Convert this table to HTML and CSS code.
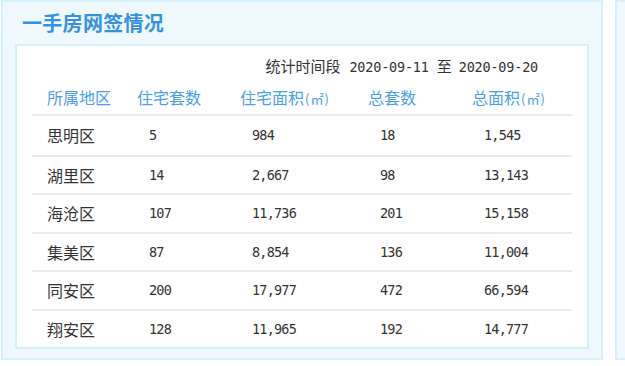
FILE: index.html
```html
<!DOCTYPE html>
<html lang="zh">
<head>
<meta charset="utf-8">
<link rel="stylesheet" href="styles.css">
</head>
<body>
<div class="page">
  <section class="panel">
    <h2 class="title">一手房网签情况</h2>
    <div class="box">
      <div class="period">统计时间段<span class="num">2020-09-11</span>至<span class="num">2020-09-20</span></div>
      <div class="table">
        <div class="row head">
          <div class="cell">所属地区</div>
          <div class="cell">住宅套数</div>
          <div class="cell">住宅面积<span class="unit">(㎡)</span></div>
          <div class="cell">总套数</div>
          <div class="cell">总面积<span class="unit">(㎡)</span></div>
        </div>
        <div class="row">
          <div class="cell name">思明区</div>
          <div class="cell num">5</div>
          <div class="cell num">984</div>
          <div class="cell num">18</div>
          <div class="cell num">1,545</div>
        </div>
        <div class="row">
          <div class="cell name">湖里区</div>
          <div class="cell num">14</div>
          <div class="cell num">2,667</div>
          <div class="cell num">98</div>
          <div class="cell num">13,143</div>
        </div>
        <div class="row">
          <div class="cell name">海沧区</div>
          <div class="cell num">107</div>
          <div class="cell num">11,736</div>
          <div class="cell num">201</div>
          <div class="cell num">15,158</div>
        </div>
        <div class="row">
          <div class="cell name">集美区</div>
          <div class="cell num">87</div>
          <div class="cell num">8,854</div>
          <div class="cell num">136</div>
          <div class="cell num">11,004</div>
        </div>
        <div class="row">
          <div class="cell name">同安区</div>
          <div class="cell num">200</div>
          <div class="cell num">17,977</div>
          <div class="cell num">472</div>
          <div class="cell num">66,594</div>
        </div>
        <div class="row">
          <div class="cell name">翔安区</div>
          <div class="cell num">128</div>
          <div class="cell num">11,965</div>
          <div class="cell num">192</div>
          <div class="cell num">14,777</div>
        </div>
      </div>
    </div>
  </section>
  <section class="panel side"></section>
</div>
</body>
</html>
```

FILE: styles.css
```css
* { box-sizing: border-box; }
html, body { margin: 0; padding: 0; background: #ffffff; overflow: hidden; }
body {
  width: 625px;
  height: 366px;
  font-family: "Noto Sans CJK SC", "Noto Sans", sans-serif;
  color: #333;
}
.page {
  display: flex;
  gap: 12px;
  padding-left: 1px;
  align-items: flex-start;
}
.panel {
  flex: 0 0 602px;
  height: 360px;
  background: #eef8fd;
  border: 2px solid #d3f0fb;
  padding: 0 12px 9px 12px;
  display: flex;
  flex-direction: column;
}
.panel.side {
  flex: 0 0 40px;
  padding: 0;
}
.title {
  margin: 0;
  height: 43px;
  padding: 8px 0 0 7px;
  font-size: 20px;
  line-height: 26px;
  font-weight: 700;
  color: #3591e2;
  letter-spacing: 0.3px;
}
.box {
  flex: 1;
  background: #fff;
  border: 2px solid #d3f0fb;
  padding: 10px 15px 0 15px;
}
.period {
  height: 20px;
  line-height: 20px;
  text-align: right;
  padding-right: 34px;
  font-size: 15px;
  color: #333;
}
.period .num {
  font-family: "DejaVu Sans Mono", monospace;
  font-size: 13.5px;
  letter-spacing: -0.2px;
  margin: 0 8px 0 9px;
}
.period .num:last-child { margin-right: 0; margin-left: 7px; }
.table {
  margin-top: 2px;
}
.row {
  display: grid;
  grid-template-columns: 90px 103px 128px 104px 1fr;
  height: 38.5px;
  align-items: center;
  border-top: 2px solid #ebebeb;
}
.row.head {
  height: 38px;
  border-top: none;
  border-bottom: 2px solid #ebebeb;
  color: #4aa0ea;
  font-size: 16px;
}
.row.head + .row { border-top: none; }
.cell {
  padding-left: 15px;
  white-space: nowrap;
}
.head .cell { padding-top: 1px; }
.unit {
  font-size: 13px;
  letter-spacing: 1px;
  padding-left: 1px;
}
.cell.name {
  font-size: 16px;
  color: #333;
}
.cell.num {
  padding-left: 27px;
  font-family: "DejaVu Sans Mono", monospace;
  font-size: 13.5px;
  letter-spacing: -0.8px;
  color: #333;
}
```
